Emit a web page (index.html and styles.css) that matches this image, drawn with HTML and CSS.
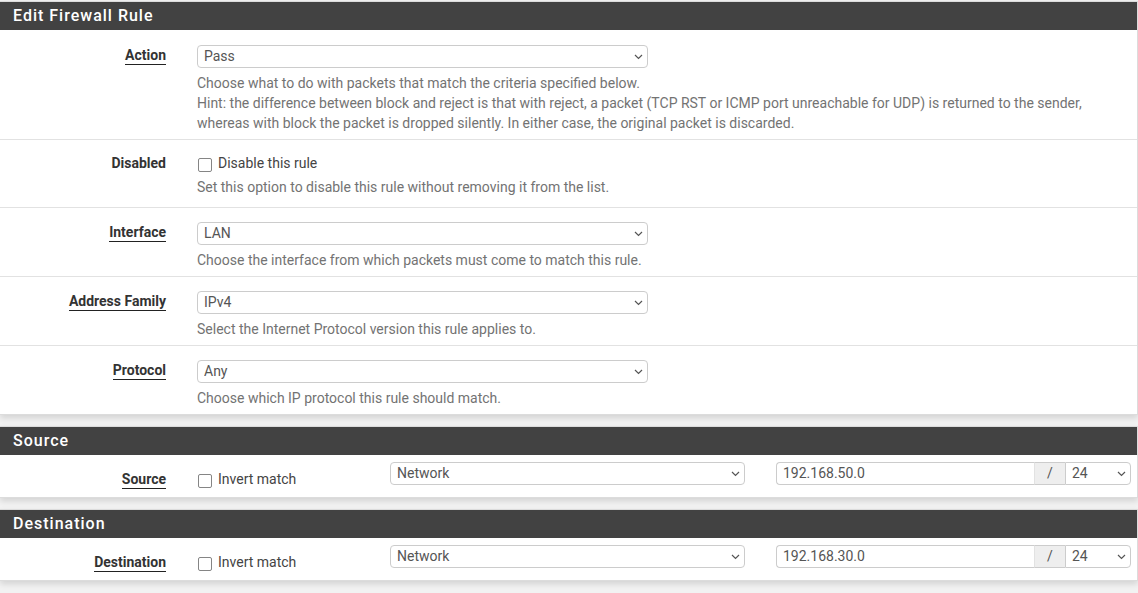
FILE: index.html
```html
<!DOCTYPE html>
<html>
<head>
<meta charset="utf-8">
<title>Edit Firewall Rule</title>
<link rel="stylesheet" href="styles.css">
</head>
<body>
<div class="panel">
  <div class="panel-heading">Edit Firewall Rule</div>
  <div class="form-row first">
    <div class="label-col"><span class="req">Action</span></div>
    <div class="field-col">
      <span class="sel-wrap sel-wide"><select class="sel"><option>Pass</option></select><svg class="chev" width="9" height="6" viewBox="0 0 9 6"><path d="M1 1 L4.5 4.5 L8 1" fill="none" stroke="#555" stroke-width="1.2"/></svg></span>
      <div class="help">Choose what to do with packets that match the criteria specified below.<br>Hint: the difference between block and reject is that with reject, a packet (TCP RST or ICMP port unreachable for UDP) is returned to the sender,<br>whereas with block the packet is dropped silently. In either case, the original packet is discarded.</div>
    </div>
  </div>
  <div class="form-row check-row">
    <div class="label-col"><span>Disabled</span></div>
    <div class="field-col">
      <label class="chk"><input type="checkbox"> Disable this rule</label>
      <div class="help help-check">Set this option to disable this rule without removing it from the list.</div>
    </div>
  </div>
  <div class="form-row">
    <div class="label-col"><span class="req">Interface</span></div>
    <div class="field-col">
      <span class="sel-wrap sel-wide"><select class="sel"><option>LAN</option></select><svg class="chev" width="9" height="6" viewBox="0 0 9 6"><path d="M1 1 L4.5 4.5 L8 1" fill="none" stroke="#555" stroke-width="1.2"/></svg></span>
      <div class="help">Choose the interface from which packets must come to match this rule.</div>
    </div>
  </div>
  <div class="form-row">
    <div class="label-col"><span class="req">Address Family</span></div>
    <div class="field-col">
      <span class="sel-wrap sel-wide"><select class="sel"><option>IPv4</option></select><svg class="chev" width="9" height="6" viewBox="0 0 9 6"><path d="M1 1 L4.5 4.5 L8 1" fill="none" stroke="#555" stroke-width="1.2"/></svg></span>
      <div class="help">Select the Internet Protocol version this rule applies to.</div>
    </div>
  </div>
  <div class="form-row last">
    <div class="label-col"><span class="req">Protocol</span></div>
    <div class="field-col">
      <span class="sel-wrap sel-wide"><select class="sel"><option>Any</option></select><svg class="chev" width="9" height="6" viewBox="0 0 9 6"><path d="M1 1 L4.5 4.5 L8 1" fill="none" stroke="#555" stroke-width="1.2"/></svg></span>
      <div class="help">Choose which IP protocol this rule should match.</div>
    </div>
  </div>
</div>

<div class="panel">
  <div class="panel-heading">Source</div>
  <div class="inline-row">
    <div class="label-col inline-label"><span class="req">Source</span></div>
    <div class="inline-check"><label class="chk"><input type="checkbox"> Invert match</label></div>
    <div class="inline-type"><span class="sel-wrap sel-full"><select class="sel"><option>Network</option></select><svg class="chev" width="9" height="6" viewBox="0 0 9 6"><path d="M1 1 L4.5 4.5 L8 1" fill="none" stroke="#555" stroke-width="1.2"/></svg></span></div>
    <div class="inline-addr">
      <div class="addr-group">
        <input class="addr-input" type="text" value="192.168.50.0">
        <span class="addon">/</span>
        <span class="sel-wrap mask"><select class="sel"><option>24</option></select><svg class="chev" width="9" height="6" viewBox="0 0 9 6"><path d="M1 1 L4.5 4.5 L8 1" fill="none" stroke="#555" stroke-width="1.2"/></svg></span>
      </div>
    </div>
  </div>
</div>

<div class="panel">
  <div class="panel-heading">Destination</div>
  <div class="inline-row">
    <div class="label-col inline-label"><span class="req">Destination</span></div>
    <div class="inline-check"><label class="chk"><input type="checkbox"> Invert match</label></div>
    <div class="inline-type"><span class="sel-wrap sel-full"><select class="sel"><option>Network</option></select><svg class="chev" width="9" height="6" viewBox="0 0 9 6"><path d="M1 1 L4.5 4.5 L8 1" fill="none" stroke="#555" stroke-width="1.2"/></svg></span></div>
    <div class="inline-addr">
      <div class="addr-group">
        <input class="addr-input" type="text" value="192.168.30.0">
        <span class="addon">/</span>
        <span class="sel-wrap mask"><select class="sel"><option>24</option></select><svg class="chev" width="9" height="6" viewBox="0 0 9 6"><path d="M1 1 L4.5 4.5 L8 1" fill="none" stroke="#555" stroke-width="1.2"/></svg></span>
      </div>
    </div>
  </div>
</div>
</body>
</html>
```

FILE: styles.css
```css
* { box-sizing: border-box; }

html, body {
  margin: 0;
  padding: 0;
}

body {
  background: #f2f2f2;
  font-family: Roboto, "Liberation Sans", Arial, sans-serif;
  font-size: 14px;
  color: #333;
  width: 1138px;
  padding-top: 1px;
}

.panel {
  background: #fff;
  border: 1px solid #dcdcdc;
  border-left: 0;
  width: 1138px;
  margin-bottom: 11px;
  box-shadow: 0 3px 6px rgba(0, 0, 0, 0.13);
}

.panel-heading {
  background: #424242;
  color: #fff;
  font-size: 16px;
  font-weight: 500;
  letter-spacing: 1px;
  height: 28px;
  line-height: 28px;
  padding-left: 13px;
}

.form-row {
  display: grid;
  grid-template-columns: 166px 1fr;
  padding: 14px 0 6px;
  border-bottom: 1px solid #e2e2e2;
}

.form-row.first {
  padding-top: 15px;
}

.form-row.last {
  border-bottom: 0;
}

.check-row {
  padding: 13px 0 10px;
}

.label-col {
  text-align: right;
  font-weight: 700;
  color: #333;
  line-height: 20px;
}

.req {
  border-bottom: 1px solid #222;
  padding-bottom: 1px;
}

.field-col {
  padding-left: 31px;
  padding-right: 15px;
}

.sel-wrap {
  position: relative;
  display: block;
  height: 23px;
}

.sel-wide {
  width: 451px;
}

.sel-full {
  width: 355px;
}

.sel {
  -webkit-appearance: none;
  appearance: none;
  font-family: Roboto, "Liberation Sans", Arial, sans-serif;
  font-size: 14px;
  color: #555;
  width: 100%;
  height: 23px;
  border: 1px solid #cccccc;
  border-radius: 4px;
  background-color: #fff;
  padding: 0 20px 1px 6px;
  margin: 0;
  display: block;
  outline: none;
}

.chev {
  position: absolute;
  right: 5px;
  top: 9px;
  pointer-events: none;
}

.help {
  color: #737373;
  line-height: 20px;
  margin-top: 5px;
}

.help-check {
  margin-top: 4px;
}

.chk {
  display: flex;
  align-items: center;
  height: 20px;
  line-height: 20px;
  color: #444;
  font-weight: 400;
}

.chk input {
  -webkit-appearance: none;
  appearance: none;
  width: 14px;
  height: 14px;
  border: 1.5px solid #858585;
  border-radius: 2px;
  background: #fff;
  margin: 3px 6px 0 1px;
  flex: none;
}

.inline-row {
  display: grid;
  grid-template-columns: 166px 224px 355px 386px;
  padding: 7px 0 8px;
}

.inline-label {
  padding-top: 7px;
}

.inline-check {
  padding-left: 31px;
  padding-top: 7px;
}

.inline-addr {
  padding-left: 31px;
}

.addr-group {
  display: flex;
  width: 355px;
  height: 23px;
}

.addr-input {
  width: 258px;
  height: 23px;
  border: 1px solid #cccccc;
  border-right: 0;
  border-radius: 4px 0 0 4px;
  font-family: Roboto, "Liberation Sans", Arial, sans-serif;
  font-size: 14px;
  color: #555;
  padding: 0 6px 1px;
  margin: 0;
  outline: none;
}

.addon {
  width: 31px;
  height: 23px;
  background: #eeeeee;
  border: 1px solid #cccccc;
  border-left: 1px solid #e2e2e2;
  border-right: 0;
  color: #555;
  text-align: center;
  line-height: 21px;
  font-size: 14px;
}

.mask {
  width: 66px;
}

.mask .sel {
  border-radius: 0 4px 4px 0;
}
```
